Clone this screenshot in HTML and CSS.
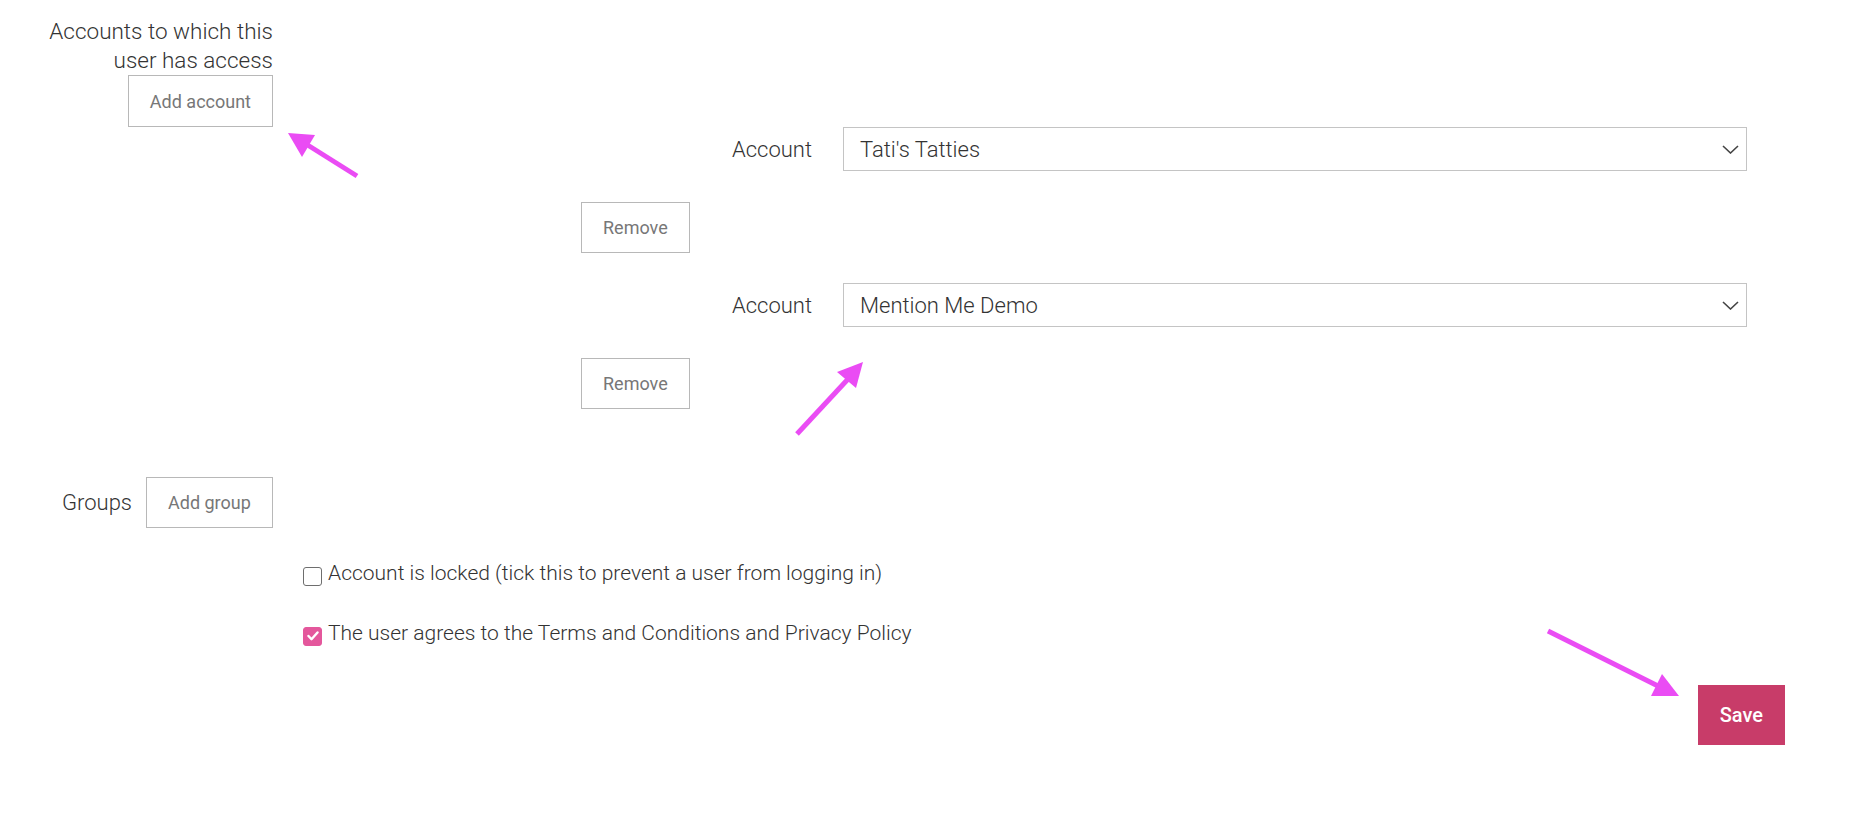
FILE: index.html
```html
<!DOCTYPE html>
<html lang="en">
<head>
<meta charset="utf-8">
<title>User accounts</title>
<link rel="stylesheet" href="styles.css">
</head>
<body>
<form class="page">
  <div class="accounts-head">
    <div class="head-label">Accounts to which this<br>user has access</div>
    <button type="button" class="btn">Add account</button>
  </div>

  <div class="account-entry">
    <div class="field-row">
      <label class="field-label">Account</label>
      <div class="select">
        <span class="select-value">Tati's Tatties</span>
        <svg class="chevron" width="17" height="9" viewBox="0 0 17 9"><path d="M1 1 L8.5 8 L16 1" fill="none" stroke="#444" stroke-width="1.6"/></svg>
      </div>
    </div>
    <div class="remove-row"><button type="button" class="btn">Remove</button></div>
  </div>

  <div class="account-entry">
    <div class="field-row">
      <label class="field-label">Account</label>
      <div class="select">
        <span class="select-value">Mention Me Demo</span>
        <svg class="chevron" width="17" height="9" viewBox="0 0 17 9"><path d="M1 1 L8.5 8 L16 1" fill="none" stroke="#444" stroke-width="1.6"/></svg>
      </div>
    </div>
    <div class="remove-row"><button type="button" class="btn">Remove</button></div>
  </div>

  <div class="groups-row">
    <label class="groups-label">Groups</label>
    <button type="button" class="btn">Add group</button>
  </div>

  <div class="checks">
    <label class="check"><span class="box"></span>Account is locked (tick this to prevent a user from logging in)</label>
    <label class="check"><span class="box box-checked"><svg width="12" height="10" viewBox="0 0 12 10"><path d="M1.5 5 L4.5 8.2 L10.5 1.5" fill="none" stroke="#fff" stroke-width="2.4" stroke-linecap="round" stroke-linejoin="round"/></svg></span>The user agrees to the Terms and Conditions and Privacy Policy</label>
  </div>

  <div class="actions">
    <button type="button" class="btn-save">Save</button>
  </div>

  <svg class="annotations" width="1872" height="826" viewBox="0 0 1872 826">
    <g fill="#ea4cf4" stroke="#ea4cf4">
      <line x1="357" y1="176" x2="306" y2="144" stroke-width="5"/>
      <polygon points="288,133 315,135 302,157" stroke="none"/>
      <line x1="797" y1="434" x2="849" y2="378" stroke-width="5"/>
      <polygon points="863,362 837,372 856,388" stroke="none"/>
      <line x1="1548" y1="631" x2="1660" y2="687" stroke-width="5"/>
      <polygon points="1679,696 1651,696 1662,674" stroke="none"/>
    </g>
  </svg>
</form>
</body>
</html>
```

FILE: styles.css
```css
* { box-sizing: border-box; }

html, body {
  margin: 0;
  background: #fff;
}

body {
  font-family: Roboto, "Liberation Sans", Arial, sans-serif;
  color: #333;
}

.page {
  position: relative;
  width: 1872px;
  height: 826px;
  padding-top: 17px;
}

.accounts-head {
  width: 273px;
  display: flex;
  flex-direction: column;
  align-items: flex-end;
}

.head-label {
  font-size: 22.5px;
  font-weight: 300;
  line-height: 29px;
  text-align: right;
}

.btn {
  height: 52px;
  padding: 0 21px;
  background: #fff;
  border: 1px solid #b8b8b8;
  border-radius: 0;
  color: #777;
  font-family: Roboto, "Liberation Sans", Arial, sans-serif;
  font-size: 18px;
  font-weight: 400;
  cursor: pointer;
}

.account-entry {
  display: flex;
  flex-direction: column;
}

.account-entry + .account-entry {
  margin-top: 30px;
}

.field-row {
  display: flex;
  align-items: center;
  gap: 31px;
}

.field-label {
  width: 812px;
  text-align: right;
  font-size: 22px;
  font-weight: 300;
}

.select {
  width: 904px;
  height: 44px;
  border: 1px solid #c4c4c4;
  display: flex;
  align-items: center;
  justify-content: space-between;
  padding: 0 7px 0 16px;
  background: #fff;
}

.select-value {
  font-size: 22px;
  font-weight: 300;
  color: #333;
}

.chevron {
  display: block;
}

.remove-row {
  margin-top: 31px;
  padding-left: 581px;
}

.remove-row .btn {
  height: 51px;
}

.groups-row {
  margin-top: 68px;
  display: flex;
  align-items: center;
  gap: 14px;
}

.groups-label {
  width: 132px;
  text-align: right;
  font-size: 22px;
  font-weight: 300;
}

.groups-row .btn {
  height: 51px;
}

.checks {
  margin-top: 30px;
  padding-left: 303px;
  display: flex;
  flex-direction: column;
  gap: 30px;
}

.check {
  display: flex;
  align-items: center;
  gap: 6px;
  font-size: 21px;
  font-weight: 300;
  line-height: 30px;
  color: #333;
}

.box {
  width: 19px;
  height: 19px;
  border: 1.5px solid #6e6e6e;
  border-radius: 3px;
  background: #fff;
  display: flex;
  align-items: center;
  justify-content: center;
  margin-top: 6px;
}

.box-checked {
  background: #e4579c;
  border-color: #e4579c;
}

.actions {
  margin-top: 37px;
  padding-right: 87px;
  display: flex;
  justify-content: flex-end;
}

.btn-save {
  height: 60px;
  padding: 0 22px;
  background: #c83c69;
  border: none;
  border-radius: 0;
  color: #fff;
  font-family: Roboto, "Liberation Sans", Arial, sans-serif;
  font-size: 20px;
  font-weight: 500;
  cursor: pointer;
}

.annotations {
  position: absolute;
  top: 0;
  left: 0;
  pointer-events: none;
}
```
